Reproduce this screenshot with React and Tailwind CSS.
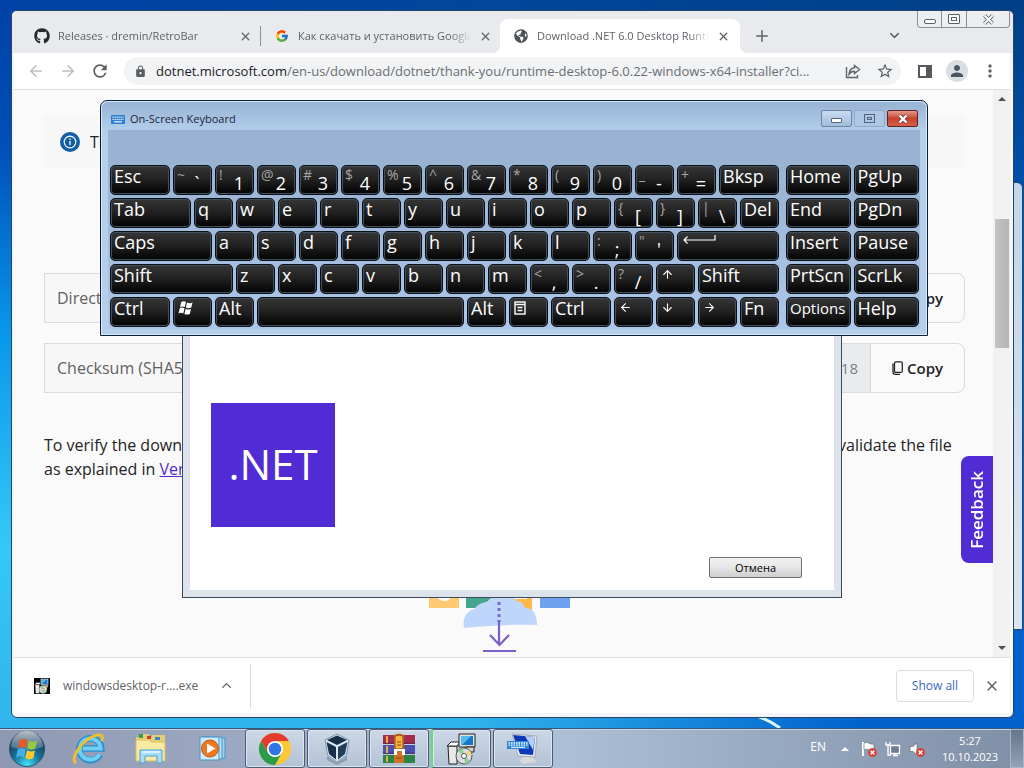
import React, { useState } from 'react';
import { ArrowLeft, ArrowRight, ChevronDown, ChevronUp, Plus, X, ArrowUp, ArrowDown } from 'lucide-react';
import { FaGithub, FaGlobeAmericas } from 'react-icons/fa';
import { FcGoogle } from 'react-icons/fc';
import { MdLock, MdStarBorder, MdRefresh, MdPerson, MdMoreVert } from 'react-icons/md';

const KEY_WIDTHS = {
  s: 'w-[39px]',
  m: 'w-[60px]',
  l: 'w-[81px]',
  xl: 'w-[102px]',
  xxl: 'w-[123px]',
  space: 'w-[207px]',
  side: 'w-[65px]',
};

const MenuGlyph = () => (
  <svg width="12" height="14" viewBox="0 0 12 14" fill="none" stroke="#fff" strokeWidth="1.4">
    <rect x="1" y="1" width="10" height="12" />
    <path d="M1 3.5h10M3.5 6.5h5M3.5 9.5h5" />
  </svg>
);

const FlagGlyph = () => (
  <svg width="16" height="14" viewBox="0 0 16 14" fill="#fff">
    <path d="M3.300 1q2.300-1.400 4.600-.1L6.800 6Q4.600 4.800 2 6z" />
    <path d="M9 1.500q2.500 1.300 5.500 0l-1.200 5q-2.700 1.300-5.400-.1z" />
    <path d="M1.800 7.200q2.300-1.300 4.700 0l-1.200 5.200q-2.300-1.200-4.800 0z" />
    <path d="M7.600 7.800q2.600 1.300 5.400.1l-1.200 5q-2.800 1.300-5.400 0z" />
  </svg>
);

const EnterGlyph = () => (
  <svg width="34" height="12" viewBox="0 0 34 12" fill="none" stroke="#fff" strokeWidth="1.2">
    <path d="M33 0v5H2M5.500 1.500L2 5l3.500 3.500" />
  </svg>
);

const arrow = (Icon, name) => ({ icon: <Icon size={13} strokeWidth={2} />, name });
const pair = (top, main) => ({ top, main, name: main });
const letters = (text) => text.split('').map((c) => ({ label: c, name: c }));
const word = (label, w, name) => ({ label, w, name: name || label });

const MAIN_ROWS = [
  [
    word('Esc', 'm'), pair('~', '`'), pair('!', '1'), pair('@', '2'), pair('#', '3'), pair('$', '4'), pair('%', '5'),
    pair('^', '6'), pair('&', '7'), pair('*', '8'), pair('(', '9'), pair(')', '0'), pair('_', '-'), pair('+', '='), word('Bksp', 'm'),
  ],
  [word('Tab', 'l'), ...letters('qwertyuiop'), pair('{', '['), pair('}', ']'), pair('|', '\\'), word('Del', 's')],
  [word('Caps', 'xl'), ...letters('asdfghjkl'), pair(':', ';'), pair('"', "'"), { icon: <EnterGlyph />, w: 'xl', name: 'Enter' }],
  [word('Shift', 'xxl'), ...letters('zxcvbnm'), pair('<', ','), pair('>', '.'), pair('?', '/'), arrow(ArrowUp, 'Up'), word('Shift', 'l')],
  [
    word('Ctrl', 'm'), { icon: <FlagGlyph />, name: 'Windows' }, word('Alt', 's'),
    word('', 'space', 'Space'), word('Alt', 's'), { icon: <MenuGlyph />, name: 'Menu' }, word('Ctrl', 'm'),
    arrow(ArrowLeft, 'Left'), arrow(ArrowDown, 'Down'), arrow(ArrowRight, 'Right'), word('Fn', 's'),
  ],
];

const SIDE_ROWS = [
  ['Home', 'PgUp'],
  ['End', 'PgDn'],
  ['Insert', 'Pause'],
  ['PrtScn', 'ScrLk'],
  ['Options', 'Help'],
];

const Key = ({ label, top, main, icon, w = 's', name }) => (
  <button
    aria-label={name}
    className={`${KEY_WIDTHS[w]} h-[30px] shrink-0 flex rounded-[5px] border border-[#0a0f14] bg-linear-to-b from-[#363636] via-[#202020] to-[#040404] text-white shadow-[inset_0_0_0_1px_#41505c] text-left overflow-hidden pl-[3px]`}
  >
    {label && <span className={`${label === 'Options' ? 'text-[15px]' : 'text-lg'} leading-5`}>{label}</span>}
    {icon && <span className="pt-[3px] pl-[1px]">{icon}</span>}
    {main && (
      <>
        <span className="w-[14px] text-sm leading-[18px] text-[#a5a5a5] antialiased">{top}</span>
        <span className="w-[12px] pt-[5px] text-lg leading-6 text-center">{main}</span>
      </>
    )}
  </button>
);

const KeyboardIcon = () => (
  <svg width="14" height="9" viewBox="0 0 14 9">
    <rect width="14" height="9" rx="1" fill="#2f7fd0" />
    <path d="M1.500 2.200h11M1.500 4.400h11" stroke="#e8f4ff" strokeWidth="1.200" strokeDasharray="1.200 .8" />
    <path d="M3 6.800h8" stroke="#e8f4ff" strokeWidth="1.200" />
  </svg>
);

const OnScreenKeyboard = () => (
  <section className="absolute z-20 left-[100px] top-[100px] w-[828px] rounded-t-[7px] border border-[#0c1e38] bg-[#b5cfea] px-[7px] pb-[6px] shadow-[inset_0_0_0_1px_#d5e8f8]">
    <header className="h-[29px] flex items-start justify-between -mx-[6px] mt-[1px] -mb-[1px] rounded-t-[6px] pl-[9px] pr-[8px] bg-linear-to-b from-[#98b3d3] to-[#b4cfeb]">
      <h2 className="flex items-center gap-[5px] pt-[8px] text-[11px] leading-[18px] text-[#1b2540]">
        <KeyboardIcon />
        On-Screen Keyboard
      </h2>
      <div className="flex gap-[2px] pt-[8px]">
        <button aria-label="Minimize" className="w-[31px] h-[17px] flex items-end justify-center pb-[3px] rounded-[2px] border border-[#6d86a8] bg-linear-to-b from-[#c8dbf0] to-[#a3bcd9]">
          <span className="w-[11px] h-[5px] border border-[#53637c] bg-white rounded-[1px]" />
        </button>
        <button aria-label="Maximize" className="w-[31px] h-[17px] flex items-center justify-center rounded-[2px] border border-[#92abca] bg-[#aec7e3]">
          <span className="w-[11px] h-[9px] border border-[#53637c] flex items-center justify-center">
            <span className="w-[5px] h-[3px] border border-[#53637c]" />
          </span>
        </button>
        <button aria-label="Close" className="w-[31px] h-[17px] flex items-center justify-center rounded-[2px] border border-[#5c2226] bg-linear-to-b from-[#e49a8c] via-[#c9402c] to-[#d8614c]">
          <svg width="12" height="10" viewBox="0 0 12 10">
            <path d="M2.500 1.500l7 7M9.500 1.500l-7 7" stroke="#5a3a40" strokeWidth="3.800" />
            <path d="M2.500 1.500l7 7M9.500 1.500l-7 7" stroke="#fff" strokeWidth="2.400" />
          </svg>
        </button>
      </div>
    </header>
    <div className="flex gap-[7px] pt-[35px] px-[2px] pb-[2px] bg-linear-to-b from-[#9ab3d3] from-20% to-[#adc7ea]">
      <div className="flex flex-col gap-[3px]">
        {MAIN_ROWS.map((row, i) => (
          <div key={i} className="flex gap-[3px]">
            {row.map((k, j) => <Key key={j} {...k} />)}
          </div>
        ))}
      </div>
      <div className="grid grid-cols-2 gap-[3px]">
        {SIDE_ROWS.flat().map((label) => <Key key={label} label={label} name={label} w="side" />)}
      </div>
    </div>
  </section>
);

const Installer = () => (
  <section className="absolute z-10 left-[182px] top-[220px] w-[660px] h-[378px] border border-[#3d495c] bg-[#dce3eb] px-[7px] pt-[30px] pb-[7px]">
    <div className="h-full bg-white flex items-end justify-between pr-[32px] pb-[12px] pl-[21px]">
      <div className="w-[124px] h-[124px] mb-[51px] bg-[#512bd4] flex items-center justify-center">
        <h2 className="text-white text-[42px] leading-none pb-[2px]">.NET</h2>
      </div>
      <button className="w-[93px] h-[21px] rounded-[2px] border border-[#707070] bg-linear-to-b from-[#f2f2f2] via-[#e6e6e6] to-[#cfcfcf] text-[11px] leading-none text-black">
        Отмена
      </button>
    </div>
  </section>
);

const Tab = ({ icon, title, active }) => (
  <div
    role="tab"
    aria-selected={!!active}
    className={
      active
        ? "relative w-[240px] h-[34px] pl-[13px] pr-[10px] flex items-center gap-[8px] bg-white rounded-t-[8px] before:absolute before:content-[''] before:-left-[8px] before:bottom-0 before:w-[8px] before:h-[8px] before:bg-[radial-gradient(circle_at_0_0,transparent_8px,#fff_8px)] after:absolute after:content-[''] after:-right-[8px] after:bottom-0 after:w-[8px] after:h-[8px] after:bg-[radial-gradient(circle_at_100%_0,transparent_8px,#fff_8px)]"
        : 'relative w-[239px] h-[34px] pl-[13px] pr-[8px] flex items-center gap-[8px]'
    }
  >
    <span className="w-4 flex justify-center">{icon}</span>
    <span className="flex-1 overflow-hidden whitespace-nowrap text-[11px] leading-5 text-[#5f6368] [mask-image:linear-gradient(to_right,#000_88%,transparent)]">
      {title}
    </span>
    <button aria-label="Close tab"><X size={13} strokeWidth={2.4} color="#5f6368" /></button>
  </div>
);

const ShareIcon = () => (
  <svg width="16" height="16" viewBox="0 0 16 16" fill="none" stroke="#5f6368" strokeWidth="1.400">
    <path d="M1.500 4v10.500h11V12M9.500 2.500L14.500 6.500l-5 4V8.300C7 8.300 5.500 9 4 11.200c.3-3.600 2.200-6 5.500-6.400z" />
  </svg>
);

const CopyButton = () => (
  <button className="w-[95px] flex items-center justify-center gap-[4px] rounded-r-[8px] border border-[#d9dadc] bg-[#fafafa] text-[15px] font-semibold text-[#242424]">
    <svg width="11" height="14" viewBox="0 0 11 14" fill="none" stroke="#242424" strokeWidth="1.300">
      <rect x="2.500" y=".8" width="7.800" height="10.600" rx="1.500" />
      <path d="M1 2.500v8.500c0 1.500.8 2.300 2.300 2.300H8" />
    </svg>
    Copy
  </button>
);

const LinkRow = ({ id, label, value }) => (
  <div className="h-[50px] flex">
    <label htmlFor={id} className="flex items-center px-3 border border-r-0 border-[#d9dadc] bg-[#f7f7f8] text-[16px] text-[#616161] whitespace-nowrap">{label}</label>
    <input id={id} readOnly defaultValue={value} className="flex-1 min-w-0 px-3 border-y border-[#d9dadc] bg-[#e9ecef] text-right text-[15px] text-[#7a7f85] outline-none" />
    <CopyButton />
  </div>
);

const DownloadArt = () => (
  <svg width="150" height="100" viewBox="0 0 150 100">
    <path d="M6 0h30v52H6z" fill="#ffc872" />
    <path d="M12 40q10 10 18 0v-6H12z" fill="#fff" />
    <path d="M43 0h34v52H43z" fill="#45a68e" />
    <path d="M80 0h29v54H80z" fill="#ffb84a" />
    <path d="M86 38h18v5H86z" fill="#fff" />
    <path d="M117 0h30v52h-30z" fill="#6ea2ee" />
    <path d="M41 72c-2-10 3-18 11-19 2-6 10-6 13-8 5-8 25-8 28 0 6 0 8 4 9 7 8 0 12 6 12 17-25-1-50 1-73 3z" fill="#bfd6fb" />
    <path d="M76 46v20" stroke="#7b6bce" strokeWidth="3" strokeDasharray="3 3" />
    <path d="M76 64v24M67 79l9.500 10 9.500-10M60 95h33" fill="none" stroke="#7a5fc8" strokeWidth="2.200" />
  </svg>
);

const Browser = () => {
  const [url, setUrl] = useState('/en-us/download/dotnet/thank-you/runtime-desktop-6.0.22-windows-x64-installer?ci...');
  return (
    <section className="absolute left-[11px] right-[10px] top-[10px] bottom-[10px] flex flex-col rounded-[6px] border border-[#2a4468] bg-[#f3f5f8] pl-[2px] pr-[3px] pb-[4px] overflow-hidden">
      <header className="relative -ml-[2px] -mr-[3px] h-[42px] shrink-0 flex items-end bg-[#e8eaed] pl-[9px]">
        <Tab icon={<FaGithub size={16} color="#24292f" />} title="Releases · dremin/RetroBar" />
        <span className="w-px h-[20px] mb-[7px] bg-[#8a8d91]" />
        <Tab icon={<FcGoogle size={14} />} title="Как скачать и установить Google Chrome" />
        <Tab icon={<FaGlobeAmericas size={14} color="#4d5156" />} title="Download .NET 6.0 Desktop Runtime" active />
        <button aria-label="New tab" className="ml-[13px] mb-[8px]"><Plus size={18} strokeWidth={2} color="#5f6368" /></button>
        <button aria-label="Search tabs" className="ml-auto mr-[111px] mb-[10px]"><ChevronDown size={15} strokeWidth={2.4} color="#5f6368" /></button>
        <div className="absolute right-[3px] top-0 h-[17px] flex border border-t-0 border-[#8b8f96] rounded-b-[4px] bg-[#eceef1] text-[#4c5058]">
          <button aria-label="Minimize" className="w-[24px] flex justify-center items-end pb-[3px] border-r border-[#8b8f96]"><span className="w-[12px] h-[5px] border border-[#5b5f68] rounded-[2px] bg-white" /></button>
          <button aria-label="Maximize" className="w-[25px] flex justify-center items-center border-r border-[#8b8f96]">
            <span className="w-[12px] h-[10px] border border-[#5b5f68] rounded-[1px] bg-white flex items-center justify-center"><span className="w-[6px] h-[4px] border border-[#5b5f68]" /></span>
          </button>
          <button aria-label="Close" className="w-[42px] flex justify-center items-center">
            <svg width="13" height="11" viewBox="0 0 13 11">
              <path d="M2.500 1.500l8 8M10.500 1.500l-8 8" stroke="#5b5f68" strokeWidth="3.800" />
              <path d="M2.500 1.500l8 8M10.500 1.500l-8 8" stroke="#fff" strokeWidth="2" />
            </svg>
          </button>
        </div>
      </header>

      <nav className="h-[37px] shrink-0 flex items-center bg-white border-b border-[#dcdee1] pl-[13px] pr-[10px]">
        <button aria-label="Back"><ArrowLeft size={18} strokeWidth={2} color="#bcbec1" /></button>
        <button aria-label="Forward" className="ml-[14px]"><ArrowRight size={18} strokeWidth={2} color="#bcbec1" /></button>
        <button aria-label="Reload" className="ml-[13px]"><MdRefresh size={20} color="#5a5d61" /></button>
        <div className="ml-[14px] flex-1 min-w-0 h-[28px] flex items-center rounded-full bg-[#f1f3f4] pl-[10px] pr-[7px]">
          <MdLock size={13} color="#5a5d61" className="shrink-0" />
          <span className="ml-[9px] text-[13px] leading-5 text-[#202124]">dotnet.microsoft.com</span>
          <input aria-label="Address" value={url} onChange={(e) => setUrl(e.target.value)} className="flex-1 min-w-0 bg-transparent text-[13px] leading-5 text-[#6a6e73] outline-none" />
          <button aria-label="Share" className="ml-[14px]"><ShareIcon /></button>
          <button aria-label="Bookmark" className="ml-[15px]"><MdStarBorder size={18} color="#5a5d61" /></button>
        </div>
        <button aria-label="Side panel" className="ml-[17px] w-[14px] h-[13px] border-2 border-r-[6px] border-[#55585c]" />
        <button aria-label="Profile" className="ml-[14px] w-[22px] h-[22px] rounded-full bg-[#dadfe4] flex items-center justify-center"><MdPerson size={18} color="#4a5663" /></button>
        <button aria-label="Menu" className="ml-[12px]"><MdMoreVert size={20} color="#5f6368" /></button>
      </nav>

      <div className="relative flex-1 min-h-0 flex bg-[#fafafa]">
        <main className="flex-1 min-w-0 pl-[30px] pr-[28px] pt-[26px] overflow-hidden text-base leading-6 text-[#242424]">
          <div className="h-[52px] flex items-center gap-[10px] pl-[16px] bg-[#f7f7f8]">
            <svg width="20" height="20" viewBox="0 0 20 20">
              <circle cx="10" cy="10" r="10" fill="#115ea3" />
              <circle cx="10" cy="10" r="5.800" fill="none" stroke="#fff" strokeWidth="1.200" />
              <path d="M10 9v4M10 6.600v1.400" stroke="#fff" strokeWidth="1.300" />
            </svg>
            Thanks for downloading .NET 6.0 Desktop Runtime
          </div>
          <div className="mt-[105px] flex flex-col gap-[20px]">
            <LinkRow id="direct" label="Direct link" value="windowsdesktop-runtime-6.0.22-win-x64.exe" />
            <LinkRow id="checksum" label="Checksum (SHA512)" value="02f2d1a2c8e4b5c8a6018" />
          </div>
          <p className="mt-[40px]">
            To verify the downloaded file has not been corrupted, you could use the SHA512 checksum value above to validate the file as explained in <a href="#verify" className="text-[#512bd4] underline">Verify the downloaded file</a>.
          </p>
          <div className="mt-[75px] pr-[14px] flex justify-center"><DownloadArt /></div>
        </main>
        <div className="w-[17px] flex flex-col items-center justify-between bg-[#f1f1f1] py-[7px]">
          <div className="flex flex-col items-center">
            <span className="border-x-4 border-x-transparent border-b-4 border-b-[#505050]" />
            <span className="mt-[118px] w-[14px] h-[129px] bg-linear-to-r from-[#c4c4c4] to-[#b4b4b4]" />
          </div>
          <span className="border-x-4 border-x-transparent border-t-4 border-t-[#505050]" />
        </div>
        <button className="absolute right-[17px] top-[366px] w-[32px] h-[107px] flex items-center justify-center rounded-l-[8px] bg-[#512bd4] text-white text-[17px] font-semibold">
          <span className="[writing-mode:vertical-rl] rotate-180">Feedback</span>
        </button>
      </div>

      <footer className="h-[56px] shrink-0 flex items-center bg-white border-t border-[#dadce0] pl-[14px] pr-[10px]">
        <button className="flex items-center pl-[6px] text-xs text-[#5f6368]">
          <span className="w-4 h-4 bg-black"><InstallerIcon size={16} /></span>
          <span className="ml-[13px]">windowsdesktop-r....exe</span>
        </button>
        <button aria-label="More actions" className="ml-[21px]"><ChevronUp size={15} strokeWidth={2.2} color="#5f6368" /></button>
        <span className="ml-[16px] w-px h-[44px] bg-[#dadce0]" />
        <button className="ml-auto w-[78px] h-[32px] rounded-[4px] border border-[#dadce0] text-xs font-medium text-[#3b67c0]">Show all</button>
        <button aria-label="Close downloads" className="ml-[10px]"><X size={16} strokeWidth={2.2} color="#5f6368" /></button>
      </footer>
    </section>
  );
};

const InstallerIcon = ({ size = 32 }) => (
  <svg width={size} height={size} viewBox="0 0 32 32">
    <path d="M2 13h9v18H3z" fill="#e8e8ea" stroke="#222" />
    <path d="M1 13l4-4h9l-3 4z" fill="#fff" stroke="#222" />
    <path d="M13 1h16v13H13z" fill="#e4e2dc" stroke="#222" />
    <path d="M15 3h12v9H15z" fill="#1378c8" />
    <path d="M15 3h10L16 12h-1z" fill="#58b7ee" />
    <path d="M20 14h8v5h-8z" fill="#d0d0c8" stroke="#222" />
    <circle cx="18" cy="23" r="8" fill="#d8dde0" stroke="#555" />
    <path d="M18 23l-6-5a8 8 0 0 1 5-3zM18 23l6 5a8 8 0 0 1-5 3z" fill="#8fce9a" />
    <path d="M18 23l5-6a8 8 0 0 1 3 5z" fill="#f1d58a" />
    <circle cx="18" cy="23" r="2.500" fill="#fff" stroke="#555" />
  </svg>
);

const StartOrb = () => (
  <svg width="38" height="38" viewBox="0 0 38 38">
    <defs>
      <radialGradient id="orb" cx=".5" cy=".95" r=".85">
        <stop offset="0" stopColor="#45e2fa" />
        <stop offset=".45" stopColor="#16789e" />
        <stop offset="1" stopColor="#18304e" />
      </radialGradient>
      <linearGradient id="gloss" x1="0" y1="0" x2="0" y2="1">
        <stop offset="0" stopColor="#fff" stopOpacity=".7" />
        <stop offset="1" stopColor="#fff" stopOpacity=".15" />
      </linearGradient>
    </defs>
    <circle cx="19" cy="19" r="17.500" fill="url(#orb)" stroke="#35506a" />
    <path d="M3 17a16 16 0 0 1 32 0q-16 6-32 0z" fill="url(#gloss)" />
    <path d="M11.500 10.500q4-2.500 8-.5l-1.500 8q-4-2-8 0z" fill="#e8562a" />
    <path d="M20.800 10.800q4 2 8.200 0l-1.800 8q-4 1.800-7.900-.3z" fill="#98c93c" />
    <path d="M9.700 19.500q4-2 8 0l-1.700 7.800q-4-2-8 .3z" fill="#48aee8" />
    <path d="M19 20.300q4 2 8 .3l-1.700 7.600q-4 2-8-.3z" fill="#fbc92e" />
  </svg>
);

const IeIcon = () => (
  <svg width="34" height="34" viewBox="0 0 34 34" fill="none">
    <path d="M28 22.500a11 11 0 1 1 1.300-6H11" stroke="#2a8fd0" strokeWidth="6.500" />
    <path d="M27.500 22a10.500 10.500 0 1 1 1.200-5.500H11" stroke="#6fd0f4" strokeWidth="4" />
    <path d="M4 31C-2 27 9 9 22 4c7-2.600 10-1 7.500 5" stroke="#efc22c" strokeWidth="2.800" />
  </svg>
);

const ExplorerIcon = () => (
  <svg width="34" height="32" viewBox="0 0 34 32">
    <path d="M2 4h5V1h8v3h3V2h13v26H2z" fill="#e6cf72" />
    <path d="M5 1h4v4H5z" fill="#3c9a48" />
    <path d="M13 3h4v3h-4z" fill="#cc3e2c" />
    <path d="M21 4h5v3h-5z" fill="#3f83c8" />
    <path d="M2 7h13l2 2h14v19H2z" fill="#f8eaa4" stroke="#d9bf63" />
    <path d="M6 17h22v13h-5v-7H11v7H6z" fill="#a9dcf5" stroke="#4c9fd0" />
    <path d="M8 19h18" stroke="#e8f8ff" strokeWidth="1.500" />
  </svg>
);

const PlayerIcon = () => (
  <svg width="30" height="30" viewBox="0 0 30 30">
    <path d="M9 4h18v20H9z" fill="#9fd3ef" stroke="#4a94c4" />
    <path d="M6 3h18v22H6z" fill="#b8e2f6" stroke="#4a94c4" />
    <path d="M2 3h19v23H2z" fill="#cbeafa" stroke="#4a94c4" />
    <circle cx="12" cy="14.500" r="8.500" fill="#ee7722" stroke="#c9570f" />
    <path d="M9 9.500l8.500 5L9 19.500z" fill="#fff" />
  </svg>
);

const ChromeIcon = () => (
  <svg width="34" height="34" viewBox="0 0 34 34">
    <circle cx="17" cy="17" r="16" fill="#fcc934" />
    <path d="M3.140 9A16 16 0 0 1 30.860 9H17v8L10 21z" fill="#e33b2e" />
    <path d="M3.140 9A16 16 0 0 0 17 33l6.900-12H10z" fill="#2a9a4b" />
    <circle cx="17" cy="17" r="8" fill="#fff" />
    <circle cx="17" cy="17" r="6.300" fill="#2f76e2" />
  </svg>
);

const VBoxIcon = () => (
  <svg width="30" height="32" viewBox="0 0 30 32">
    <path d="M5 23l10 7 10-7v4l-10 5-10-5z" fill="#8b9fb0" />
    <path d="M15 1l12 6-2.500 15L15 29 5.500 22 3 7z" fill="#dfe8ee" stroke="#7e93a4" />
    <path d="M15 2.500L25 7l-10 5L5 7z" fill="#16304a" />
    <path d="M4.500 9L14 14v12.500L7 21z" fill="#16304a" />
    <path d="M25.500 9L16 14v12.500L23 21z" fill="#1f3f5c" />
  </svg>
);

const WinRarIcon = () => (
  <svg width="34" height="32" viewBox="0 0 34 32">
    <path d="M1 2h32v9H1z" fill="#a42c4c" />
    <path d="M1 12h32v9H1z" fill="#4d4fae" />
    <path d="M1 22h32v8H1z" fill="#2c8444" />
    <path d="M1 9.500h32v1.500H1zM1 19.500h32V21H1z" fill="#3a2348" opacity=".5" />
    <path d="M4 3h2v7H4zM4 13h2v7H4zM4 23h2v6H4z" fill="#e0b040" />
    <path d="M12 2q5-3 10 0v28H12z" fill="#cf7426" />
    <path d="M13 3q4-2 8 0v13h-8z" fill="#f6b445" stroke="#8a4a18" />
    <path d="M12 16v6h3v-4h5v4h3v-6" fill="#fff" />
    <path d="M15 9h4M15 12h4M14 25h6" stroke="#8a4a18" />
  </svg>
);

const OskIcon = () => (
  <svg width="34" height="32" viewBox="0 0 34 32">
    <path d="M17 23l10-2 1 5 3 3-14 2-3-3z" fill="#d8dad6" />
    <path d="M6 1l25 2-2 21-17-1z" fill="#e8eaec" stroke="#a4acb8" />
    <path d="M7 2l22 2-2 18-13-1z" fill="#0d38b8" />
    <path d="M19 3l10 1-2 13z" fill="#b6cef4" />
    <path d="M1 8h22v8H1z" fill="#2b88d8" />
    <path d="M2.500 10h19M2.500 12.200h19" stroke="#fff" strokeWidth="1.300" strokeDasharray="1.500 1" />
    <path d="M5 14.300h14" stroke="#fff" />
  </svg>
);

const TASKS = [
  { name: 'Internet Explorer', icon: <IeIcon /> },
  { name: 'Windows Explorer', icon: <ExplorerIcon /> },
  { name: 'Windows Media Player', icon: <PlayerIcon /> },
  { name: 'Google Chrome', icon: <ChromeIcon />, open: true },
  { name: 'VirtualBox', icon: <VBoxIcon />, open: true },
  { name: 'WinRAR', icon: <WinRarIcon />, open: true },
  { name: 'Installer', icon: <InstallerIcon />, open: true, progress: true },
  { name: 'On-Screen Keyboard', icon: <OskIcon />, open: true },
];

const Cross = () => (
  <>
    <circle cx="11.500" cy="11.500" r="4.500" fill="#d5473c" />
    <path d="M9.700 9.700l3.600 3.600M13.300 9.700l-3.600 3.600" stroke="#fff" strokeWidth="1.300" />
  </>
);

const Taskbar = () => (
  <footer className="h-[40px] shrink-0 flex items-stretch border-t border-[#36597f] bg-linear-to-r from-[#8f98b2] via-[#adbfd6] via-55% to-[#7e8fa6] shadow-[inset_0_1px_0_#c5d5e6]">
    <button aria-label="Start" className="w-[57px] flex items-center justify-center pr-[3px]"><StartOrb /></button>
    <div className="flex gap-[2px] pl-[2px]">
      {TASKS.map(({ name, icon, open, progress }) => (
        <button
          key={name}
          aria-label={name}
          className={`w-[60px] flex items-center justify-center rounded-[3px] ${
            open ? 'border border-[#4c5c72] shadow-[inset_0_0_0_1px_#dce6f1] bg-linear-to-b from-[#cdd8e6] to-[#b3c2d6]' : ''
          } ${progress ? 'border-l-2 border-l-[#5ee070]' : ''}`}
        >
          {icon}
        </button>
      ))}
    </div>
    <div className="ml-auto flex items-center text-white text-xs leading-4">
      <span className="pb-[4px]">EN</span>
      <button aria-label="Show hidden icons" className="ml-[15px] border-x-4 border-x-transparent border-b-4 border-b-white" />
      <div className="ml-[12px] flex gap-[8px]">
        <svg width="16" height="16" viewBox="0 0 16 16"><path d="M2 1v14" stroke="#fff" strokeWidth="2" /><path d="M3 2c4-2 5 2 10 1v6c-5 1-6-2-10 0z" fill="#fff" stroke="#566" strokeWidth=".6" /><Cross /></svg>
        <svg width="16" height="16" viewBox="0 0 16 16" fill="none" stroke="#fff"><path d="M5.500 4.500h9v8h-9zM8 14.500h5M10 12v2" fill="#6d7d92" strokeWidth="1.300" /><path d="M1 1v3h4V1M3 4v10h3" strokeWidth="1.300" /></svg>
        <svg width="16" height="16" viewBox="0 0 16 16"><path d="M1 5.500h3L8 2v12l-4-3.500H1z" fill="#fff" stroke="#566" strokeWidth=".6" /><Cross /></svg>
      </div>
      <div className="ml-[16px] w-[58px] text-center text-[11px]">
        <p>5:27</p>
        <p>10.10.2023</p>
      </div>
      <button aria-label="Show desktop" className="ml-[11px] w-[14px] self-stretch border border-[#a9b6c6] bg-linear-to-b from-[#65758c] to-[#93a2b6]" />
    </div>
  </footer>
);

const App = () => (
  <div className="h-screen flex flex-col overflow-hidden select-none bg-[#0868d2] font-['Open_Sans','Noto_Sans',sans-serif]">
    <div className="relative flex-1 min-h-0 bg-[linear-gradient(to_right,transparent_45%,#0060cc_85%),linear-gradient(to_bottom,#0042a6,#0050b8_20%,#0898ea_46%,#34c8f8_75%,#30b4ec)]">
      <div className="absolute inset-x-0 top-0 h-[360px] bg-[linear-gradient(to_right,transparent,#00479a_50%,#003f85)] [mask-image:linear-gradient(#000,transparent)]" />
      <svg className="absolute right-[220px] bottom-0" width="60" height="14" viewBox="0 0 60 14" fill="none">
        <path d="M6 0q16 4 30 14" stroke="#d8f4ff" strokeWidth="3" />
      </svg>
      <div className="absolute right-[1px] top-[182px] w-[16px] h-[448px] rounded-tr-[6px] border border-[#28456c] bg-linear-to-b from-[#c3d5e8] to-[#d8e4f0]" />
      <Browser />
      <Installer />
      <OnScreenKeyboard />
    </div>
    <Taskbar />
  </div>
);

export default App;
